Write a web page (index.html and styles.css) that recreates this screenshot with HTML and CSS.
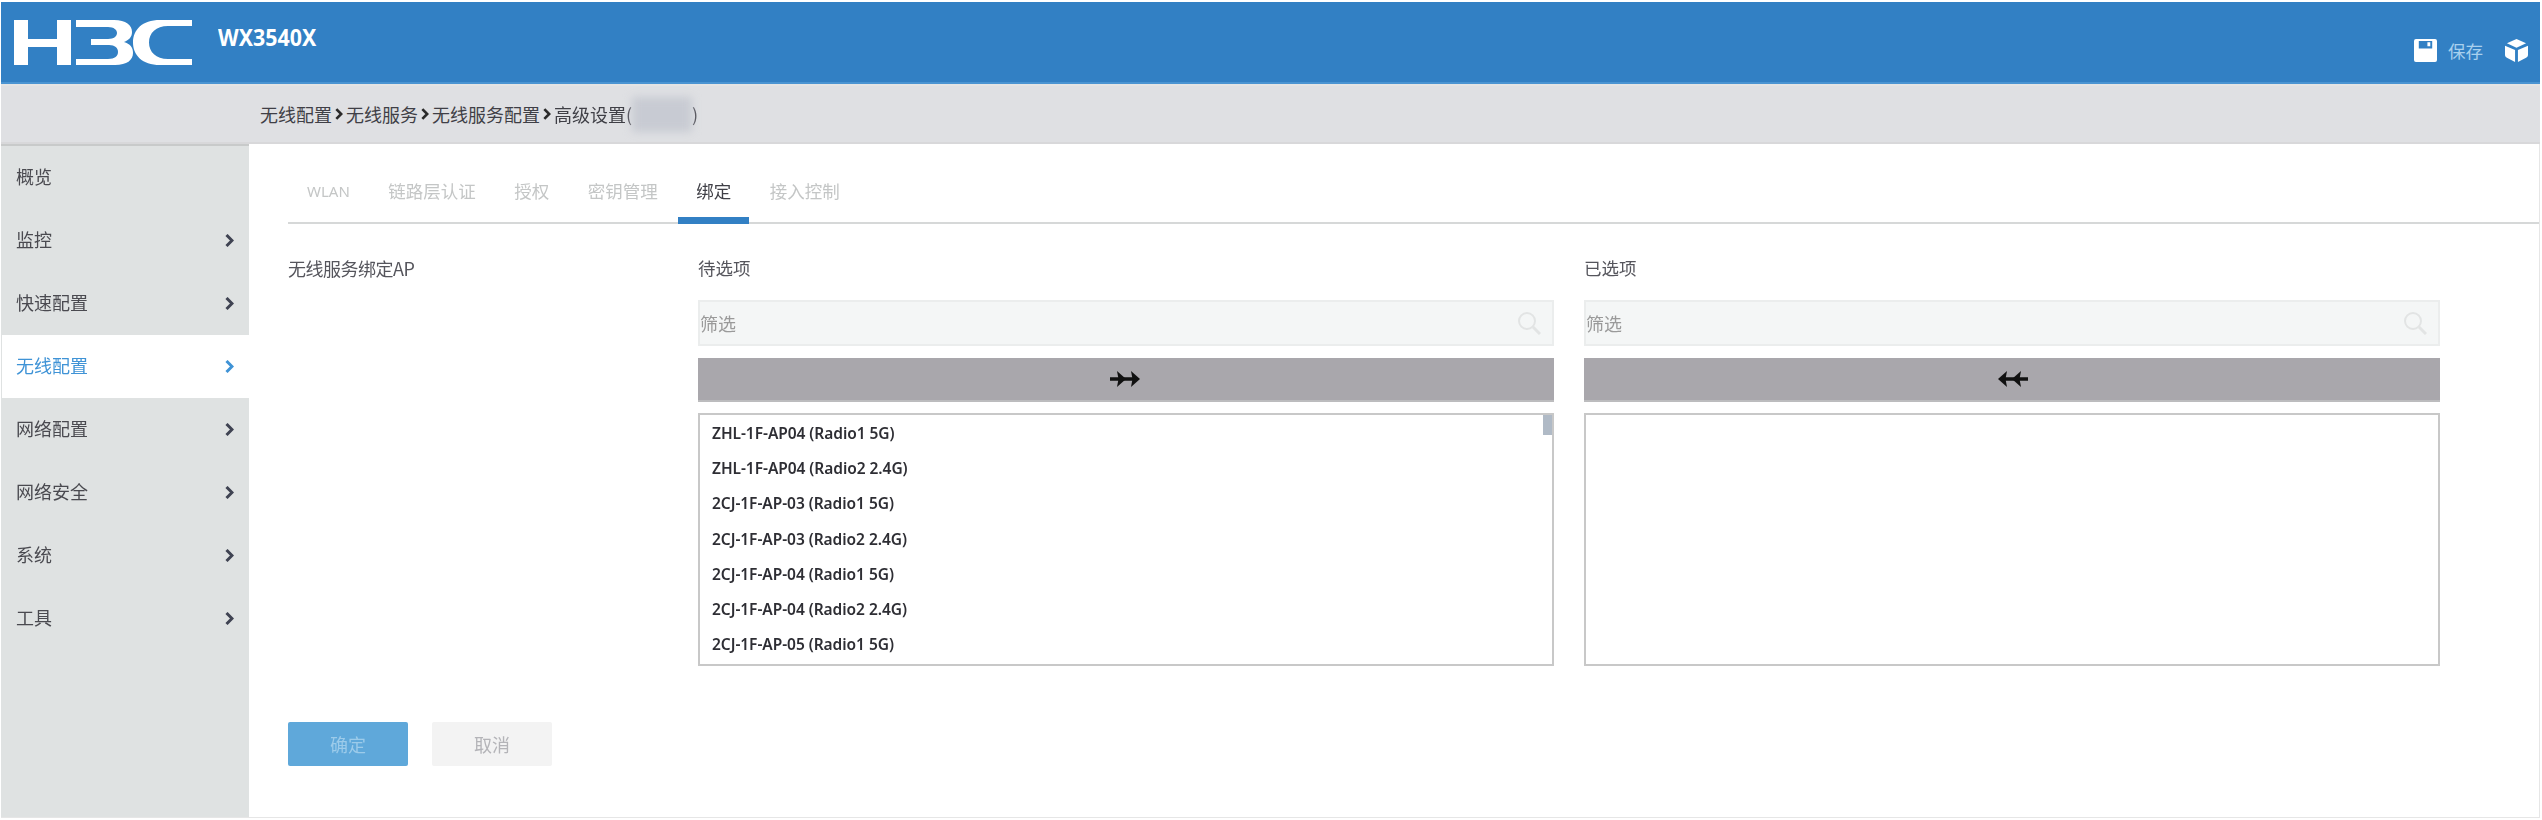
FILE: index.html
```html
<!DOCTYPE html>
<html lang="zh">
<head>
<meta charset="utf-8">
<title>H3C WX3540X</title>
<link rel="stylesheet" href="styles.css">
</head>
<body>
<svg class="defs" width="0" height="0">
  <defs>
    <symbol id="chev" viewBox="0 0 9 13"><path d="M1.500 1l5.500 5.500-5.500 5.500" fill="none" stroke="currentColor" stroke-width="3"/></symbol>
    <symbol id="search" viewBox="0 0 24 24"><g fill="none" stroke="#e2e4e4"><circle cx="10" cy="10" r="8" stroke-width="2"/><path d="M16 16l7 7" stroke-width="3"/></g></symbol>
  </defs>
</svg>
<div class="app">
  <header class="topbar">
    <div class="brand">
      <svg class="logo" width="180" height="46" viewBox="0 0 180 46">
        <path fill="#fff" d="M1 0h14v19h29V0h14v45H44V27H15v18H1z"/>
        <path fill="#fff" d="M63 0h38c12 0 18 5 18 12 0 5-3 8-8 10 6 2 9 5 9 11 0 7-6 12-18 12H63v-6h32c7 0 10-3 10-7s-3-7-9-7H78v-6h17c6 0 9-3 9-6s-3-6-9-6H63z"/>
        <path fill="#fff" d="M179 0v6h-24c-12 0-19 7-19 16.500s7 16.500 19 16.500h24v6h-32c-18 0-27-10-27-22.500S129 0 147 0z"/>
      </svg>
      <span class="model">WX3540X</span>
    </div>
    <div class="tools">
      <svg class="icon-save" width="23" height="23" viewBox="0 0 24 24"><path fill="#fff" fill-rule="evenodd" d="M2 0h20a2 2 0 0 1 2 2v20a2 2 0 0 1-2 2H2a2 2 0 0 1-2-2V2a2 2 0 0 1 2-2zm3 2v8h14V2zm9 1.500h3v4h-3z"/></svg>
      <span class="save-label">保存</span>
      <svg class="icon-cube" width="23" height="23" viewBox="0 0 24 24"><path fill="#fff" d="M12 0l10 4.500L12 9 2 4.500zM0 7l10.500 4.500V24L2 19.500A3 3 0 0 1 0 17zM24 7v10a3 3 0 0 1-2 2.500L13.500 24V11.500z"/></svg>
    </div>
  </header>
  <div class="crumbbar">
    <div class="crumbs">
      <span>无线配置</span><svg class="sep"><use href="#chev"/></svg><span>无线服务</span><svg class="sep"><use href="#chev"/></svg><span>无线服务配置</span><svg class="sep"><use href="#chev"/></svg><span>高级设置(</span><i class="blur"></i><span>)</span>
    </div>
  </div>
  <div class="main">
    <nav class="sidebar">
      <a class="nav-item">概览</a>
      <a class="nav-item">监控<svg class="chev"><use href="#chev"/></svg></a>
      <a class="nav-item">快速配置<svg class="chev"><use href="#chev"/></svg></a>
      <a class="nav-item active">无线配置<svg class="chev"><use href="#chev"/></svg></a>
      <a class="nav-item">网络配置<svg class="chev"><use href="#chev"/></svg></a>
      <a class="nav-item">网络安全<svg class="chev"><use href="#chev"/></svg></a>
      <a class="nav-item">系统<svg class="chev"><use href="#chev"/></svg></a>
      <a class="nav-item">工具<svg class="chev"><use href="#chev"/></svg></a>
    </nav>
    <section class="content">
      <div class="tabs">
        <a class="tab">WLAN</a>
        <a class="tab">链路层认证</a>
        <a class="tab">授权</a>
        <a class="tab">密钥管理</a>
        <a class="tab current">绑定</a>
        <a class="tab">接入控制</a>
      </div>
      <div class="form">
        <div class="form-label">无线服务绑定AP</div>
        <div class="picker">
          <div class="picker-title">待选项</div>
          <div class="filter"><span>筛选</span><svg class="search"><use href="#search"/></svg></div>
          <div class="move">
            <svg width="32" height="16" viewBox="0 0 32 16"><path d="M0 8h26" stroke="#111" stroke-width="3.500" fill="none"/><path d="M7 0l9 8-9 8 1.500-8zM21 0l9 8-9 8 1.500-8z" fill="#111"/></svg>
          </div>
          <div class="listbox">
            <div class="item">ZHL-1F-AP04 (Radio1 5G)</div>
            <div class="item">ZHL-1F-AP04 (Radio2 2.4G)</div>
            <div class="item">2CJ-1F-AP-03 (Radio1 5G)</div>
            <div class="item">2CJ-1F-AP-03 (Radio2 2.4G)</div>
            <div class="item">2CJ-1F-AP-04 (Radio1 5G)</div>
            <div class="item">2CJ-1F-AP-04 (Radio2 2.4G)</div>
            <div class="item">2CJ-1F-AP-05 (Radio1 5G)</div>
            <i class="thumb"></i>
          </div>
        </div>
        <div class="picker">
          <div class="picker-title">已选项</div>
          <div class="filter"><span>筛选</span><svg class="search"><use href="#search"/></svg></div>
          <div class="move">
            <svg width="32" height="16" viewBox="0 0 32 16"><path d="M6 8h26" stroke="#111" stroke-width="3.500" fill="none"/><path d="M25 0l-9 8 9 8-1.500-8zM11 0L2 8l9 8-1.500-8z" fill="#111"/></svg>
          </div>
          <div class="listbox"></div>
        </div>
      </div>
      <div class="actions">
        <button class="btn ok">确定</button>
        <button class="btn cancel">取消</button>
      </div>
    </section>
  </div>
</div>
</body>
</html>
```
FILE: styles.css
```css
* { box-sizing: border-box; }
html, body { margin: 0; height: 100%; background: #fff; }
body { font-family: "Noto Sans CJK SC", "Noto Sans", sans-serif; font-size: 18px; color: #4a4a52; overflow: hidden; }
.defs { position: absolute; }
.app { margin: 2px 2px 2px 1px; height: 816px; display: flex; flex-direction: column; filter: blur(.5px); }
.topbar { height: 82px; flex: none; background: #3280c4; border-bottom: 2px solid #4a94d2; display: flex; justify-content: space-between; padding: 0 12px 0 12px; }
.brand { display: flex; align-items: flex-start; }
.logo { margin-top: 18px; }
.model { margin-left: 25px; margin-top: 20px; font-family: "Noto Sans", sans-serif; font-size: 23px; line-height: 30px; font-weight: 700; color: #fff; transform: scaleX(.93); transform-origin: left center; }
.tools { display: flex; align-items: center; padding-top: 16px; }
.save-label { margin: 0 22px 0 11px; font-size: 17.500px; color: #a8d0ee; }
.crumbbar { height: 60px; flex: none; background: #dfe0e3; border-top: 2px solid #e4e4e4; border-bottom: 2px solid #d8d8da; padding-left: 259px; display: flex; align-items: center; }
.crumbs { font-size: 18px; color: #3f3f46; display: flex; align-items: center; }
.sep { width: 8px; height: 12px; margin: 0 3px; color: #2a2a2a; }
.blur { width: 60px; height: 35px; background: #c8cbd3; filter: blur(4px); }
.main { flex: 1; display: flex; border-bottom: 1px solid #e6e6e6; min-height: 0; }
.sidebar { width: 248px; flex: none; background: #dfe2e2; border-top: 2px solid #c8caca; }
.nav-item { height: 63px; display: flex; align-items: center; justify-content: space-between; padding: 0 15px 3px 15px; font-size: 18px; color: #4a4a50; }
.nav-item.active { background: #fff; color: #3f93d6; margin-left: 1px; padding-left: 14px; }
.chev { width: 9px; height: 13px; margin-top: 3px; color: #3f4352; }
.active .chev { color: #3f93d6; }
.content { flex: 1; border-right: 1px solid #e6e6e6; display: flex; flex-direction: column; padding-left: 39px; }
.tabs { height: 80px; display: flex; gap: 38.500px; flex: none; border-bottom: 2px solid #d6d8d8; align-items: flex-end; }
.tab { height: 76px; padding: 16px 0 0; display: flex; align-items: center; font-size: 17.500px; color: #c4c6c6; border-bottom: 7px solid transparent; margin-bottom: -2px; }
.tab:first-child { margin-left: 19px; font-family: "Noto Sans", sans-serif; font-size: 15px; }
.tab.current { color: #3f3f46; border-bottom-color: #3280c4; margin: 0 -18px -2px; padding: 16px 18px 0; }
.form { display: grid; grid-template-columns: 380px 856px 856px; column-gap: 30px; margin-top: 32px; flex: none; }
.form-label { font-size: 18px; line-height: 24px; color: #55555c; letter-spacing: -.5px; margin-right: -10px; }
.picker-title { font-size: 17.500px; line-height: 24px; color: #55555c; height: 44px; }
.filter { height: 46px; background: #f4f6f6; border: 2px solid #ebeded; display: flex; justify-content: space-between; align-items: center; padding: 0 11px 0 0; font-size: 18px; color: #9a9a9a; }
.search { width: 24px; height: 24px; }
.move { height: 44px; margin-top: 12px; background: #a9a7ac; border-bottom: 2px solid #bcbcbe; display: flex; align-items: center; justify-content: center; }
.listbox { position: relative; margin-top: 11px; height: 253px; border: 2px solid #c8c8c8; padding: 1px 0 0 12px; overflow: hidden; }
.item { height: 35.200px; line-height: 35.200px; font-family: "Noto Sans", sans-serif; font-size: 15.500px; font-weight: 600; color: #2e2e34; letter-spacing: -.05px; }
.thumb { position: absolute; right: 0; top: 0; width: 9px; height: 20px; background: #b0bac6; }
.actions { display: flex; gap: 24px; margin-top: 56px; }
.btn { width: 120px; height: 44px; border: 0; border-radius: 2px; font-family: inherit; font-size: 18px; }
.ok { background: #5fa8da; color: #9ccbea; }
.cancel { background: #f3f3f3; color: #b4b4b8; }
```
